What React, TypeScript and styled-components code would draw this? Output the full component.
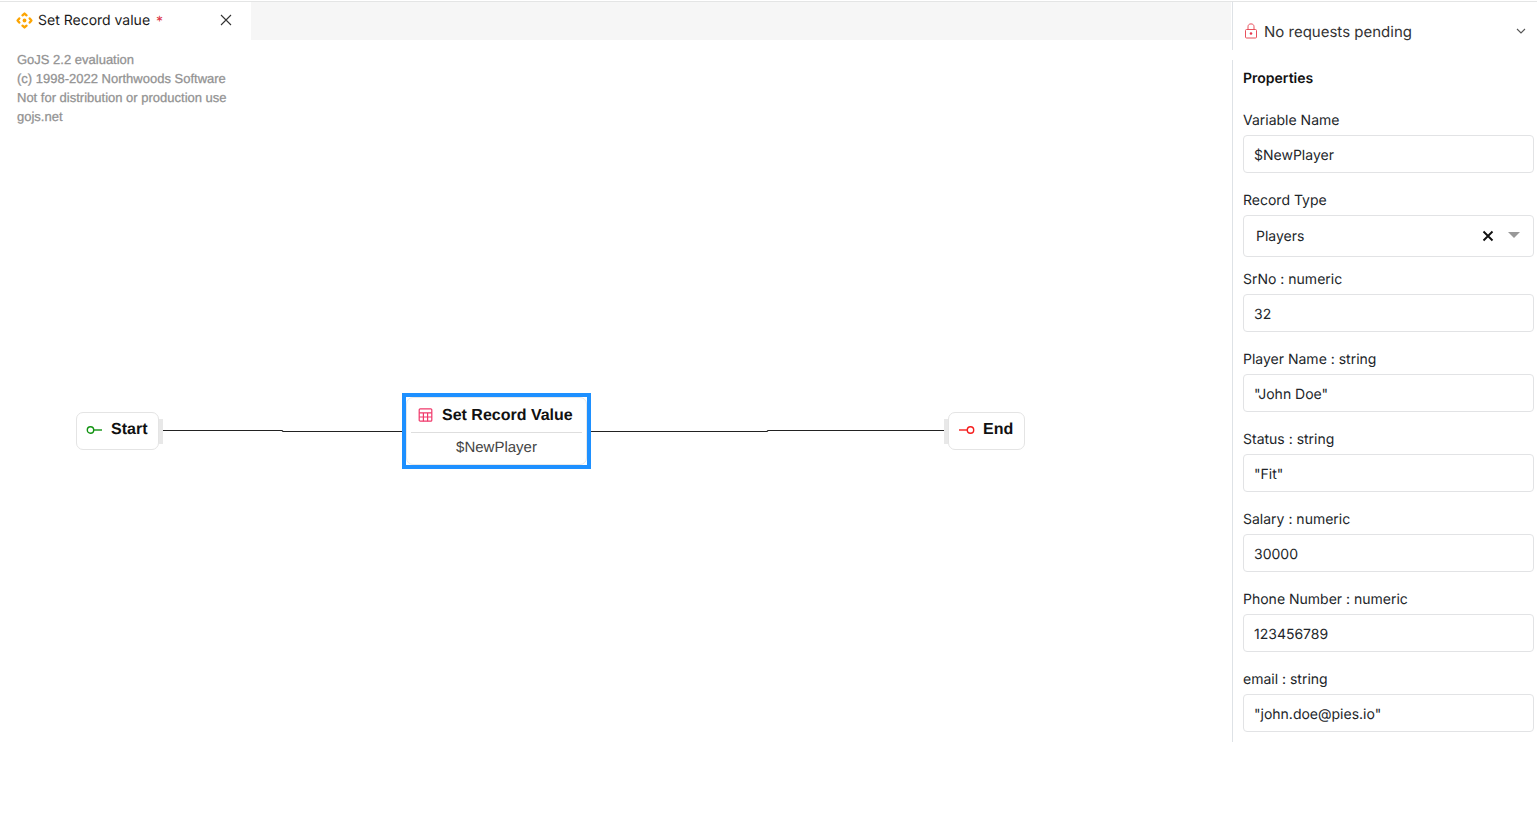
import React, { useState } from "react";
import styled, { createGlobalStyle } from "styled-components";

const GlobalStyle = createGlobalStyle`
  *, *::before, *::after { box-sizing: border-box; }
  body {
    margin: 0;
    background: #fff;
    color: #212529;
    font-family: Inter, "Liberation Sans", sans-serif;
    font-size: 14px;
    text-rendering: geometricPrecision;
  }
  button, input, select { font: inherit; color: inherit; text-rendering: inherit; }
`;

const Page = styled.div`
  display: flex;
  align-items: stretch;
  min-height: 100vh;
  padding-top: 1px;
`;

const Workspace = styled.main`
  flex: 1;
  min-width: 0;
  display: flex;
  flex-direction: column;
  border-top: 1px solid #e4e5e5;
`;

const TabBar = styled.nav`
  display: flex;
  height: 38px;
  margin-right: 1px;
  background: #f6f6f6;
`;

const Tab = styled.div`
  display: flex;
  align-items: center;
  width: 251px;
  padding: 0 16px 2px;
  background: #fff;
  color: #1a1a1a;
`;

const TabTitle = styled.span`
  margin: 0 6px 0 5px;
  padding-top: 2px;
  line-height: 20px;
`;

const Unsaved = styled.span`
  padding-top: 2px;
  color: #dc3545;
`;

const IconButton = styled.button`
  display: flex;
  align-items: center;
  justify-content: center;
  padding: 0;
  border: 0;
  background: none;
  cursor: pointer;
`;

const CloseButton = styled(IconButton)`
  width: 18px;
  height: 18px;
  margin-left: auto;
`;

const Canvas = styled.section`
  position: relative;
  flex: 1;
  font-family: "Liberation Sans", Arial, sans-serif;
`;

const Watermark = styled.p`
  margin: 0;
  padding: 10px 17px;
  color: #8c8c8c;
  font-size: 13px;
  line-height: 19px;
  -webkit-text-stroke: 0.3px #a0a0a0;
`;

const Links = styled.svg`
  position: absolute;
  left: 0;
  top: 0;
  width: 100%;
  height: 100%;
  pointer-events: none;
`;

const Node = styled.div<{ $x: number; $y: number }>`
  position: absolute;
  left: ${(p) => p.$x}px;
  top: ${(p) => p.$y}px;
`;

const Terminal = styled.div`
  display: flex;
  align-items: center;
  gap: 8px;
  height: 38px;
  padding: 0 11px 2px 9px;
  border: 1px solid #e4e4e4;
  border-radius: 7px;
  background: #fff;
`;

const Port = styled.span<{ $side: "left" | "right" }>`
  position: absolute;
  top: 7px;
  ${(p) => p.$side}: -4px;
  width: 4px;
  height: 25px;
  background: #e8e8e8;
`;

const NodeTitle = styled.strong`
  color: #111;
  font-size: 16px;
  line-height: 20px;
  white-space: nowrap;
`;

const Selected = styled(Node)`
  width: 189px;
  height: 76px;
  border: 4px solid #1e90ff;
  background: #fff;
`;

const RecordCard = styled.div`
  height: 100%;
  padding: 0 4px;
  border: 1px solid #e8e8e8;
  border-radius: 7px;
`;

const RecordHead = styled.div`
  display: flex;
  align-items: center;
  gap: 9px;
  height: 35px;
  padding: 2px 0 0 7px;
  border-bottom: 1px solid #dedede;
`;

const RecordVariable = styled.div`
  color: #444;
  font-size: 15px;
  line-height: 30px;
  text-align: center;
`;

const Sidebar = styled.aside`
  display: flex;
  flex-direction: column;
  gap: 10px;
  width: 305px;
  flex: none;
`;

const Requests = styled.button`
  display: flex;
  align-items: center;
  gap: 6px;
  width: 100%;
  height: 49px;
  padding: 10px 11px 0;
  border: 0;
  border-top: 1px solid #e4e5e5;
  border-left: 1px solid #dee2e6;
  background: #fff;
  color: #333;
  font-size: 15px;
  text-align: left;
`;

const RequestsText = styled.span`
  flex: 1;
`;

const Properties = styled.form`
  padding: 8px 3px 10px 10px;
  border-left: 1px solid #dee2e6;
`;

const Heading = styled.h2`
  margin: 0 0 20px;
  color: #111;
  font-size: 14px;
  font-weight: 600;
  line-height: 22px;
`;

const Field = styled.div<{ $last?: boolean; $tight?: boolean }>`
  display: flex;
  flex-direction: column;
  gap: 3px;
  margin-bottom: ${(p) => (p.$last ? 0 : p.$tight ? 12 : 17)}px;
`;

const Label = styled.label`
  line-height: 22px;
`;

const TextInput = styled.input`
  width: 100%;
  height: 38px;
  padding: 2px 10px 0;
  border: 1px solid #e2e3e5;
  border-radius: 4px;
  background: #fff;
  outline: none;
`;

const SelectBox = styled.div`
  display: flex;
  align-items: center;
  gap: 14px;
  height: 42px;
  padding-right: 13px;
  border: 1px solid #e2e3e5;
  border-radius: 4px;
`;

const Select = styled.select`
  flex: 1;
  min-width: 0;
  height: 100%;
  padding: 0 12px;
  border: 0;
  background: none;
  appearance: none;
  outline: none;
`;

const FlowIcon = () => (
  <svg width="17" height="17" viewBox="0 0 17 17" fill="none" stroke="#fca503" strokeWidth="2.4" strokeLinecap="round" strokeLinejoin="round" aria-hidden="true">
    <path d="M6.5 3.3 8.5 1.6l2 1.7M6.5 13.7l2 1.7 2-1.7M3.3 6.5 1.6 8.5l1.7 2M13.7 6.5l1.7 2-1.7 2" />
    <circle cx="8.5" cy="8.5" r="1.9" fill="#fca503" stroke="none" />
  </svg>
);

const CloseIcon = () => (
  <svg width="12" height="12" viewBox="0 0 12 12" fill="none" stroke="#333" strokeWidth="1.1" aria-hidden="true">
    <path d="M1 1l10 10M11 1 1 11" />
  </svg>
);

const LockIcon = () => (
  <svg width="14" height="16" viewBox="0 0 14 16" fill="none" stroke="#e8505b" strokeWidth="1" aria-hidden="true">
    <rect x="1.5" y="6.5" width="11" height="8.5" rx="1" />
    <path d="M4 6.5V3.8C4 2 5 .9 7 .9s3 1.1 3 2.9v2.7" />
    <circle cx="7" cy="10.5" r="1.3" fill="#e8384f" stroke="none" />
  </svg>
);

const ChevronIcon = () => (
  <svg width="10" height="10" viewBox="0 0 10 10" fill="none" stroke="#555" strokeWidth="1.1" aria-hidden="true">
    <path d="M1 3l4 4 4-4" />
  </svg>
);

const StartIcon = () => (
  <svg width="17" height="10" viewBox="0 0 17 10" fill="none" stroke="#129312" strokeWidth="1.4" aria-hidden="true">
    <circle cx="4.5" cy="5" r="3.2" />
    <path d="M7.7 5H16" />
  </svg>
);

const EndIcon = () => (
  <svg width="17" height="10" viewBox="0 0 17 10" fill="none" stroke="#f51d1d" strokeWidth="1.4" aria-hidden="true">
    <circle cx="12.5" cy="5" r="3.2" />
    <path d="M1 5h8.3" />
  </svg>
);

const TableIcon = () => (
  <svg width="15" height="16" viewBox="0 0 15 16" fill="none" stroke="#f0396b" strokeWidth="1.2" aria-hidden="true">
    <rect x="1.2" y=".8" width="12.6" height="12.4" rx="1" />
    <path d="M1.2 4.9h12.6M1.2 9h12.6M5.4 4.9v8.3M9.6 4.9v8.3" />
  </svg>
);

const ClearIcon = () => (
  <svg width="12" height="12" viewBox="0 0 12 12" fill="none" stroke="#111" strokeWidth="1.9" aria-hidden="true">
    <path d="M1.5 1.5l9 9M10.5 1.5l-9 9" />
  </svg>
);

const ArrowIcon = () => (
  <svg width="12" height="8" viewBox="0 0 12 8" aria-hidden="true">
    <path d="M0 0h12L6 6z" fill="#999" />
  </svg>
);

const recordFields = [
  { id: "srno", label: "SrNo : numeric", value: "32" },
  { id: "player", label: "Player Name : string", value: '"John Doe"' },
  { id: "status", label: "Status : string", value: '"Fit"' },
  { id: "salary", label: "Salary : numeric", value: "30000" },
  { id: "phone", label: "Phone Number : numeric", value: "123456789" },
  { id: "email", label: "email : string", value: '"john.doe@pies.io"' },
];

export default function App() {
  const [recordType, setRecordType] = useState("Players");

  return (
    <>
      <GlobalStyle />
      <Page>
        <Workspace>
          <TabBar>
            <Tab>
              <FlowIcon />
              <TabTitle>Set Record value</TabTitle>
              <Unsaved>*</Unsaved>
              <CloseButton type="button" aria-label="Close tab">
                <CloseIcon />
              </CloseButton>
            </Tab>
          </TabBar>
          <Canvas>
            <Watermark>
              GoJS 2.2 evaluation
              <br />
              (c) 1998-2022 Northwoods Software
              <br />
              Not for distribution or production use
              <br />
              gojs.net
            </Watermark>
            <Links fill="none" stroke="#222" strokeWidth="1.2" aria-hidden="true">
              <path d="M162 390.5H282L283 391.5H403M590 391.5H767L768 390.5H945" />
            </Links>
            <Node $x={76} $y={372}>
              <Terminal>
                <StartIcon />
                <NodeTitle>Start</NodeTitle>
              </Terminal>
              <Port $side="right" />
            </Node>
            <Selected $x={402} $y={353}>
              <RecordCard>
                <RecordHead>
                  <TableIcon />
                  <NodeTitle>Set Record Value</NodeTitle>
                </RecordHead>
                <RecordVariable>$NewPlayer</RecordVariable>
              </RecordCard>
            </Selected>
            <Node $x={948} $y={372}>
              <Port $side="left" />
              <Terminal>
                <EndIcon />
                <NodeTitle>End</NodeTitle>
              </Terminal>
            </Node>
          </Canvas>
        </Workspace>

        <Sidebar>
          <Requests type="button">
            <LockIcon />
            <RequestsText>No requests pending</RequestsText>
            <ChevronIcon />
          </Requests>
          <Properties>
            <Heading>Properties</Heading>
            <Field>
              <Label htmlFor="variable">Variable Name</Label>
              <TextInput id="variable" defaultValue="$NewPlayer" />
            </Field>
            <Field $tight>
              <Label htmlFor="record-type">Record Type</Label>
              <SelectBox>
                <Select id="record-type" value={recordType} onChange={(e) => setRecordType(e.target.value)}>
                  <option value="" />
                  <option>Players</option>
                </Select>
                <IconButton type="button" aria-label="Clear record type" onClick={() => setRecordType("")}>
                  <ClearIcon />
                </IconButton>
                <ArrowIcon />
              </SelectBox>
            </Field>
            {recordFields.map((f, i) => (
              <Field key={f.id} $last={i === recordFields.length - 1}>
                <Label htmlFor={f.id}>{f.label}</Label>
                <TextInput id={f.id} defaultValue={f.value} />
              </Field>
            ))}
          </Properties>
        </Sidebar>
      </Page>
    </>
  );
}
